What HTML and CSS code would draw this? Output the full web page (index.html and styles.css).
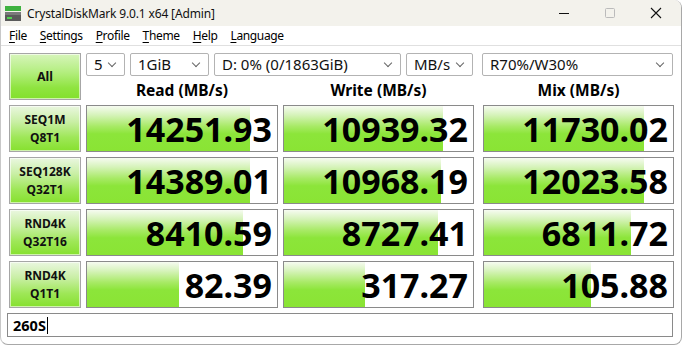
FILE: index.html
```html
<!DOCTYPE html>
<html>
<head>
<meta charset="utf-8">
<link rel="stylesheet" href="styles.css">
</head>
<body>
<div class="window">
  <div class="titlebar">
    <svg class="app-icon" width="16" height="15" viewBox="0 0 16 15">
      <rect x="0" y="0" width="16" height="5" fill="#3fb23f"/>
      <rect x="0" y="6" width="16" height="9" fill="#5a5a5a"/>
      <rect x="0" y="6" width="16" height="3" fill="#7a7a7a"/>
      <rect x="2" y="11" width="5" height="2" fill="#52d452"/>
    </svg>
    <span class="title">CrystalDiskMark 9.0.1 x64 [Admin]</span>
    <div class="controls">
      <svg class="ctl" width="46" height="26" viewBox="0 0 46 26"><line x1="18" y1="13.5" x2="28" y2="13.5" stroke="#111" stroke-width="1"/></svg>
      <svg class="ctl" width="46" height="26" viewBox="0 0 46 26"><rect x="18.5" y="8.5" width="9" height="9" rx="1" fill="none" stroke="#bbb" stroke-width="1"/></svg>
      <svg class="ctl" width="46" height="26" viewBox="0 0 46 26"><path d="M18 8 L28 18 M28 8 L18 18" stroke="#111" stroke-width="1.1"/></svg>
    </div>
  </div>
  <div class="menubar">
    <span><u>F</u>ile</span>
    <span><u>S</u>ettings</span>
    <span><u>P</u>rofile</span>
    <span><u>T</u>heme</span>
    <span><u>H</u>elp</span>
    <span><u>L</u>anguage</span>
  </div>
  <div class="main">
    <div class="btn all">All</div>
    <div class="selects">
      <div class="sel w-count">5<i class="chev"></i></div>
      <div class="sel w-size">1GiB<i class="chev"></i></div>
      <div class="sel w-drive">D: 0% (0/1863GiB)<i class="chev"></i></div>
      <div class="sel w-unit">MB/s<i class="chev"></i></div>
      <div class="sel w-mix">R70%/W30%<i class="chev"></i></div>
    </div>
    <div class="head c-read">Read (MB/s)</div>
    <div class="head c-write">Write (MB/s)</div>
    <div class="head c-mix">Mix (MB/s)</div>

    <div class="btn label">SEQ1M<br>Q8T1</div>
    <div class="cell c-read"><div class="fill" style="width:85.8%"></div><span>14251.93</span></div>
    <div class="cell c-write"><div class="fill" style="width:84%"></div><span>10939.32</span></div>
    <div class="cell c-mix"><div class="fill" style="width:84.6%"></div><span>11730.02</span></div>

    <div class="btn label">SEQ128K<br>Q32T1</div>
    <div class="cell c-read"><div class="fill" style="width:85.8%"></div><span>14389.01</span></div>
    <div class="cell c-write"><div class="fill" style="width:83%"></div><span>10968.19</span></div>
    <div class="cell c-mix"><div class="fill" style="width:84.6%"></div><span>12023.58</span></div>

    <div class="btn label">RND4K<br>Q32T16</div>
    <div class="cell c-read"><div class="fill" style="width:82%"></div><span>8410.59</span></div>
    <div class="cell c-write"><div class="fill" style="width:81.5%"></div><span>8727.41</span></div>
    <div class="cell c-mix"><div class="fill" style="width:77.8%"></div><span>6811.72</span></div>

    <div class="btn label">RND4K<br>Q1T1</div>
    <div class="cell c-read"><div class="fill" style="width:48.4%"></div><span>82.39</span></div>
    <div class="cell c-write"><div class="fill" style="width:43%"></div><span>317.27</span></div>
    <div class="cell c-mix"><div class="fill" style="width:56.6%"></div><span>105.88</span></div>
  </div>
  <div class="comment"><span>260S</span><i class="caret"></i></div>
</div>
</body>
</html>
```

FILE: styles.css
```css
* { box-sizing: border-box; }
html, body { margin: 0; padding: 0; background: #ffffff; }
body { width: 682px; height: 347px; overflow: hidden; font-family: "Noto Sans", "Open Sans", sans-serif; color: #000; }

.window {
  width: 682px;
  height: 345px;
  border: 1px solid #a8a8a8;
  border-left: 1px solid #c8c8c8;
  border-top: none;
  border-radius: 0 8px 8px 8px;
  background: #fff;
  overflow: hidden;
}

.titlebar {
  height: 26px;
  background: #f3f2ec;
  display: flex;
  align-items: center;
}
.app-icon { margin-left: 4px; margin-right: 6px; }
.title { font-size: 12px; letter-spacing: -0.15px; color: #111; }
.controls { margin-left: auto; display: flex; margin-right: 2px; }
.ctl { display: block; }

.menubar {
  height: 20px;
  display: flex;
  align-items: center;
  gap: 13px;
  padding-left: 8px;
  font-size: 12px;
  letter-spacing: -0.35px;
  border-bottom: 1px solid #e0e0e0;
  background: #fff;
}
.menubar u { text-decoration-thickness: 1px; text-underline-offset: 2px; }

.main {
  display: grid;
  grid-template-columns: 72px 192px 195px 191px;
  grid-template-rows: 23px 19px repeat(4, 47px);
  column-gap: 5px;
  row-gap: 5px;
  padding: 7px 0 0 8px;
}

.btn {
  border: 1px solid #a6a6a6;
  background: linear-gradient(#eaf7e0 0%, #c9efa5 35%, #9ee757 70%, #86e02e 100%);
  box-shadow: inset 0 0 0 1px rgba(255,255,255,0.6);
  display: flex;
  align-items: center;
  justify-content: center;
  text-align: center;
  font-weight: bold;
  color: #111;
}
.all {
  grid-row: 1 / 3;
  grid-column: 1;
  font-size: 12.5px;
  background: linear-gradient(#d7f5bb 0%, #b4ee80 40%, #8fe440 75%, #83e02d 100%);
}
.label { font-size: 12px; line-height: 18px; }

.selects {
  grid-row: 1;
  grid-column: 2 / 5;
  display: flex;
  height: 23px;
}
.sel {
  position: relative;
  height: 23px;
  border: 1px solid #b3b3b3;
  border-radius: 2px;
  background: #fff;
  font-size: 15px;
  line-height: 20px;
  padding-left: 7px;
  margin-right: 5px;
  color: #111;
  white-space: nowrap;
}
.w-count { width: 39px; }
.w-size { width: 79px; }
.w-drive { width: 187px; }
.w-unit { width: 67px; margin-right: 9px; }
.w-mix { width: 191px; margin-right: 0; }
.chev {
  position: absolute;
  right: 9px;
  top: 6px;
  width: 6px;
  height: 6px;
  border-right: 1px solid #666;
  border-bottom: 1px solid #666;
  transform: rotate(45deg);
}

.head {
  grid-row: 2;
  font-size: 15.5px;
  font-weight: bold;
  text-align: center;
  line-height: 18px;
}
.c-read { grid-column: 2; }
.c-write { grid-column: 3; width: 191px; }
.c-mix { grid-column: 4; }

.cell {
  position: relative;
  border: 1px solid #8a8a8a;
  background: #fff;
  display: flex;
  align-items: center;
  justify-content: flex-end;
  padding-right: 5px;
}
.fill {
  position: absolute;
  left: 0;
  top: 0;
  bottom: 0;
  background: linear-gradient(#f6fbf1 0%, #d6f3ba 20%, #a8ea66 45%, #8ce53a 62%, #8ae434 100%);
}
.cell span {
  position: relative;
  font-size: 34px;
  font-weight: bold;
  line-height: 1;
  color: #000;
}

.comment {
  margin: 5px 0 0 6px;
  width: 666px;
  height: 24px;
  border: 1px solid #8a8a8a;
  display: flex;
  align-items: center;
  padding-left: 5px;
  font-size: 14.5px;
  font-weight: bold;
}
.caret {
  display: inline-block;
  width: 1px;
  height: 17px;
  background: #000;
  margin-left: 1px;
}
```
